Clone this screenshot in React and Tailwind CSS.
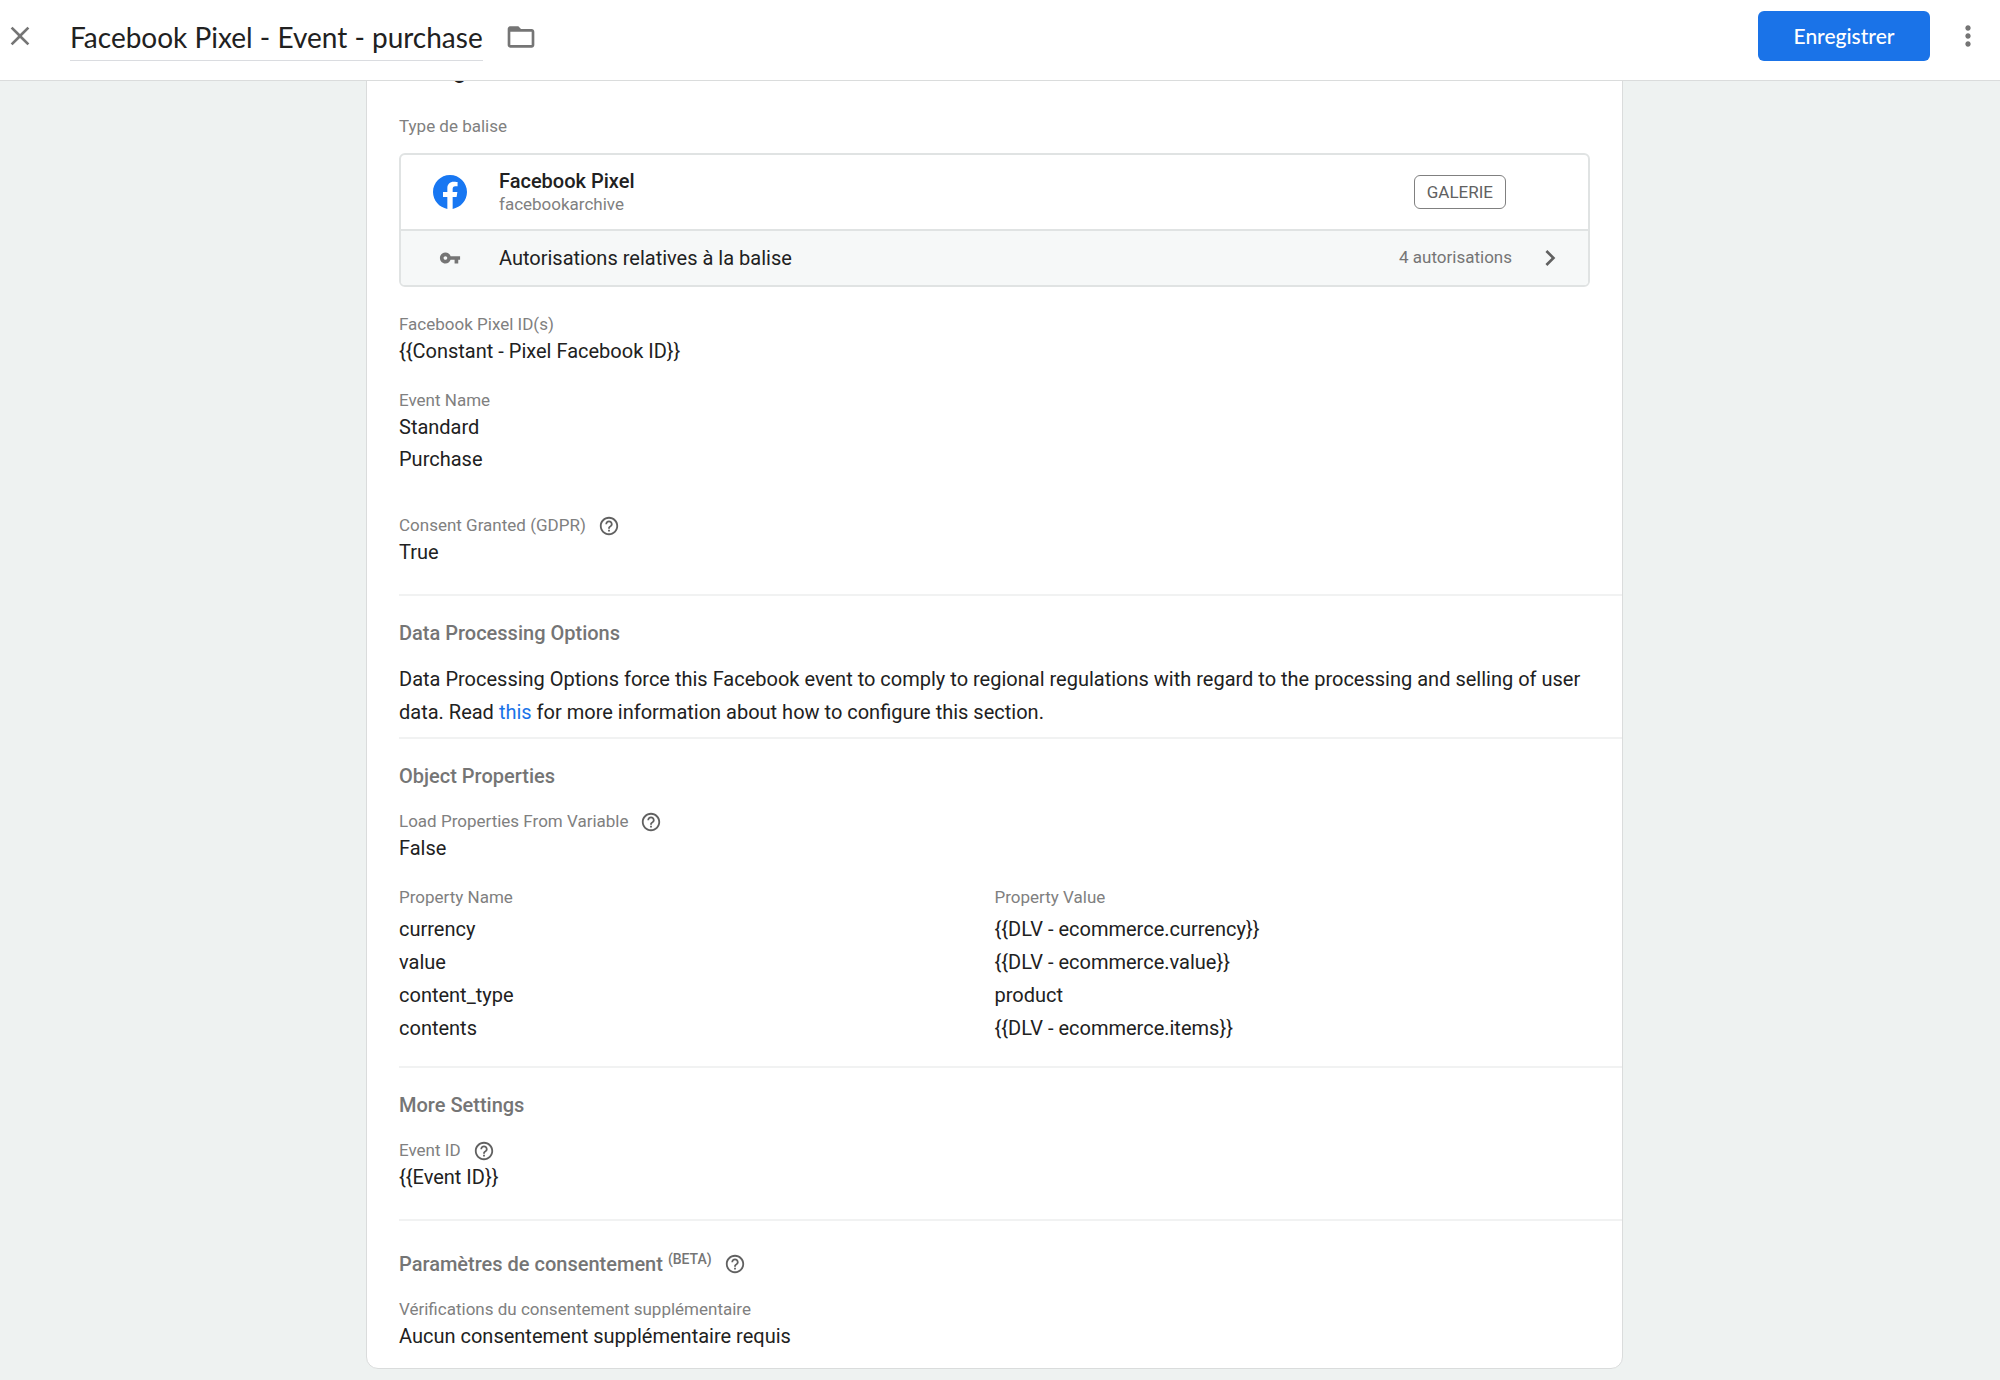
import {
  MdChevronRight,
  MdClose,
  MdFolderOpen,
  MdHelpOutline,
  MdMoreVert,
  MdVpnKey,
} from "react-icons/md";

const properties = [
  { name: "currency", value: "{{DLV - ecommerce.currency}}" },
  { name: "value", value: "{{DLV - ecommerce.value}}" },
  { name: "content_type", value: "product" },
  { name: "contents", value: "{{DLV - ecommerce.items}}" },
];

function FacebookLogo() {
  return (
    <svg viewBox="0 0 24 24" className="size-[34px]" aria-hidden="true">
      <circle cx="12" cy="12" r="11.8" fill="#fff" />
      <path
        fill="#1877f2"
        d="M24 12.073c0-6.627-5.373-12-12-12s-12 5.373-12 12c0 5.99 4.388 10.954 10.125 11.854v-8.385H7.078v-3.47h3.047V9.43c0-3.007 1.792-4.669 4.533-4.669 1.312 0 2.686.235 2.686.235v2.953H15.83c-1.491 0-1.956.925-1.956 1.874v2.25h3.328l-.532 3.47h-2.796v8.385C19.612 23.027 24 18.062 24 12.073z"
      />
    </svg>
  );
}

function Help({ about }) {
  return (
    <button type="button" aria-label={`Aide : ${about}`} className="text-[#616161]">
      <MdHelpOutline className="size-[22px]" />
    </button>
  );
}

function Field({ label, help, children }) {
  return (
    <dl>
      <dt className="flex h-6 items-center gap-3 text-[17px] text-[#808080]">
        {label}
        {help && <Help about={label} />}
      </dt>
      {children}
    </dl>
  );
}

function Value({ children }) {
  return <dd className="leading-7">{children}</dd>;
}

function Section({ children }) {
  return <section className="ml-8 border-t-2 border-[#f1f2f2] pr-8">{children}</section>;
}

function SectionTitle({ children }) {
  return <h3 className="leading-8 font-medium text-[#757575]">{children}</h3>;
}

export default function App() {
  return (
    <div className="flex min-h-screen flex-col bg-[#eef2f1] font-[Roboto,sans-serif] text-[20px] text-[#212121]">
      <header className="flex h-[81px] items-center border-b border-[#dadcdc] bg-white pr-4 pb-2 pl-1 text-[#757575]">
        <button type="button" aria-label="Fermer">
          <MdClose className="size-8" />
        </button>
        <input
          aria-label="Nom de la balise"
          defaultValue="Facebook Pixel - Event - purchase"
          className="mt-0.5 ml-[34px] field-sizing-content h-12 border-b border-[#dadce0] font-[Lato,sans-serif] text-[28px] text-[#212121] outline-none"
        />
        <button type="button" aria-label="Dossier" className="mt-0.5 ml-[22px]">
          <MdFolderOpen className="size-8" />
        </button>
        <button
          type="button"
          className="mr-[22px] ml-auto h-[50px] w-[172px] rounded-md bg-[#1a73e8] font-[Lato,sans-serif] text-[21px] font-medium text-white"
        >
          Enregistrer
        </button>
        <button type="button" aria-label="Plus d'actions">
          <MdMoreVert className="size-8" />
        </button>
      </header>

      <main className="overflow-hidden pr-[11px] pb-3">
        <article className="mx-auto -mt-[29px] w-full max-w-[1257px] rounded-xl border border-[#dadcdc] bg-white">
          <div className="px-8">
            <h2 className="text-[23px] leading-9 font-medium">Configuration de la balise</h2>
            <h3 className="mt-[25px] text-[17px] leading-6 text-[#808080]">Type de balise</h3>
            <div className="mt-[15px] overflow-hidden rounded-md border-2 border-[#e0e3e3]">
              <div className="flex h-[74px] items-center pr-[82px] pl-8">
                <FacebookLogo />
                <div className="ml-8">
                  <p className="leading-6 font-medium">Facebook Pixel</p>
                  <p className="text-[17px] leading-[22px] text-[#808080]">facebookarchive</p>
                </div>
                <span className="ml-auto rounded-md border border-[#808080] px-3 text-[17px] leading-8 text-[#616161]">
                  GALERIE
                </span>
              </div>
              <button
                type="button"
                className="flex h-14 w-full items-center border-t-2 border-[#e0e3e3] bg-[#f6f8f8] pr-[22px] pl-[38px]"
              >
                <MdVpnKey className="size-[22px] text-[#757575]" />
                <span className="ml-[38px]">Autorisations relatives à la balise</span>
                <span className="ml-auto text-[17px] text-[#757575]">4 autorisations</span>
                <MdChevronRight className="ml-[22px] size-8 text-[#616161]" />
              </button>
            </div>

            <div className="mt-[26px] mb-7 flex flex-col gap-6">
              <Field label="Facebook Pixel ID(s)">
                <Value>{"{{Constant - Pixel Facebook ID}}"}</Value>
              </Field>
              <Field label="Event Name">
                <Value>Standard</Value>
                <dd className="mt-1 mb-[17px] leading-7">Purchase</dd>
              </Field>
              <Field label="Consent Granted (GDPR)" help>
                <Value>True</Value>
              </Field>
            </div>
          </div>

          <Section>
            <div className="pt-[21px] pb-2">
              <SectionTitle>Data Processing Options</SectionTitle>
              <p className="mt-3.5 leading-[33px]">
                Data Processing Options force this Facebook event to comply to regional regulations with regard to
                the processing and selling of user data. Read{" "}
                <a href="#data-processing" className="text-[#1a73e8]">
                  this
                </a>{" "}
                for more information about how to configure this section.
              </p>
            </div>
          </Section>

          <Section>
            <div className="pt-[21px] pb-[21px]">
              <SectionTitle>Object Properties</SectionTitle>
              <div className="mt-[18px]">
                <Field label="Load Properties From Variable" help>
                  <Value>False</Value>
                </Field>
              </div>
              <table className="mt-[19px] w-full table-fixed text-left">
                <thead className="text-[17px] leading-8 text-[#808080]">
                  <tr>
                    <th className="p-0 font-normal">Property Name</th>
                    <th className="p-0 font-normal">Property Value</th>
                  </tr>
                </thead>
                <tbody className="leading-[33px]">
                  {properties.map((p) => (
                    <tr key={p.name}>
                      <td className="p-0">{p.name}</td>
                      <td className="p-0">{p.value}</td>
                    </tr>
                  ))}
                </tbody>
              </table>
            </div>
          </Section>

          <Section>
            <div className="pt-[21px] pb-7">
              <SectionTitle>More Settings</SectionTitle>
              <div className="mt-[18px]">
                <Field label="Event ID" help>
                  <Value>{"{{Event ID}}"}</Value>
                </Field>
              </div>
            </div>
          </Section>

          <Section>
            <div className="pt-[27px] pb-[18px]">
              <div className="flex items-center gap-3">
                <SectionTitle>
                  Paramètres de consentement <sup className="text-[14px]">(BETA)</sup>
                </SectionTitle>
                <Help about="Paramètres de consentement" />
              </div>
              <div className="mt-[18px]">
                <Field label="Vérifications du consentement supplémentaire">
                  <Value>Aucun consentement supplémentaire requis</Value>
                </Field>
              </div>
            </div>
          </Section>
        </article>
      </main>
    </div>
  );
}
